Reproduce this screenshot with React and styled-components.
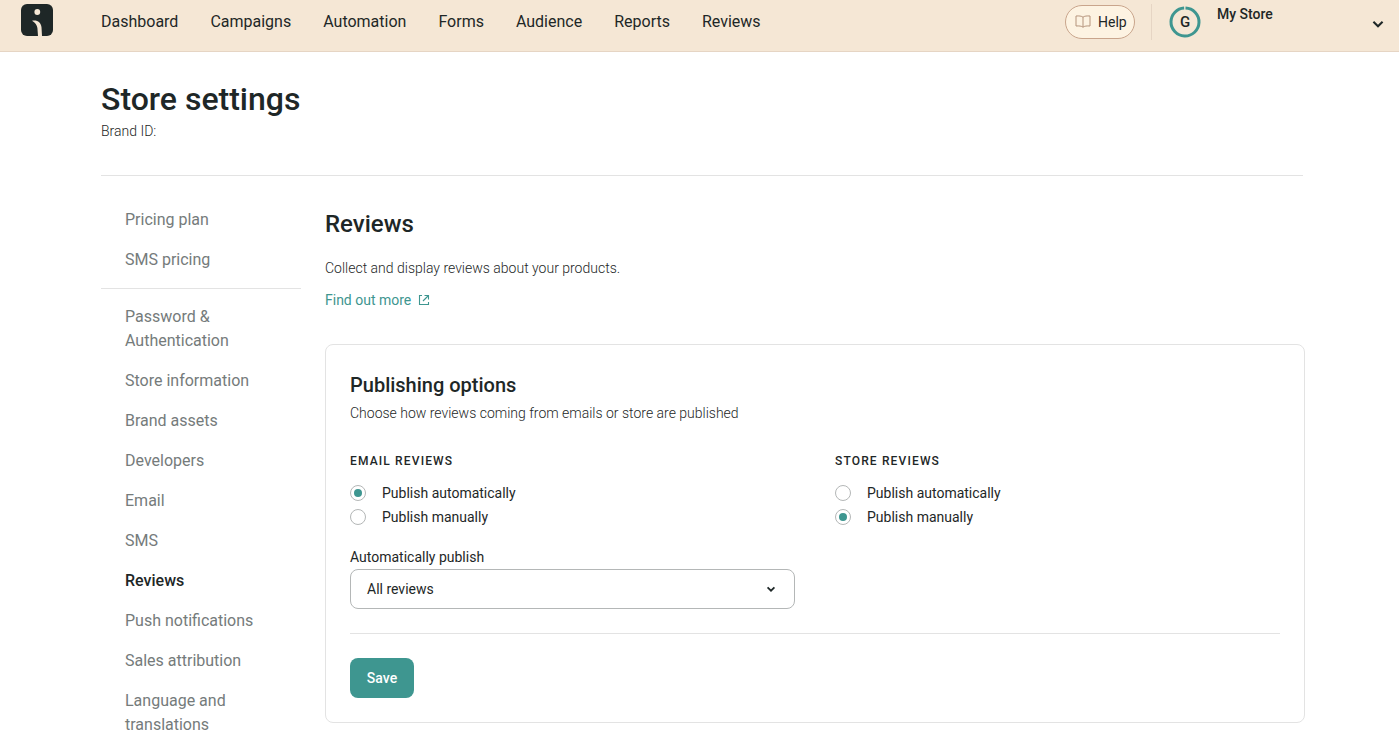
import React from "react";
import styled, { createGlobalStyle } from "styled-components";

const navItems = ["Dashboard", "Campaigns", "Automation", "Forms", "Audience", "Reports", "Reviews"];

const sideGroups = [
  ["Pricing plan", "SMS pricing"],
  [
    "Password & Authentication",
    "Store information",
    "Brand assets",
    "Developers",
    "Email",
    "SMS",
    "Reviews",
    "Push notifications",
    "Sales attribution",
    "Language and translations",
  ],
];

function Logo() {
  return (
    <svg width="32" height="32" viewBox="0 0 32 32">
      <rect width="32" height="32" rx="6" fill="#1e2727" />
      <circle cx="16.3" cy="8" r="2.9" fill="#f5e7d5" />
      <path d="M11 16.7c5-1.2 9 1.5 9.5 6.5l.5 8.8h-4l-.6-8c-.3-3-2.2-5.6-5.4-7.3z" fill="#f5e7d5" />
    </svg>
  );
}

function BookIcon() {
  return (
    <svg width="16" height="13" viewBox="0 0 16 13" fill="none" stroke="#b5947c" strokeWidth="1">
      <path d="M8 2.2C6.6 1 4 .8 1 1v10c3-.2 5.6 0 7 1.2 1.4-1.2 4-1.4 7-1.2V1c-3-.2-5.6 0-7 1.2zM8 2.2v10" />
    </svg>
  );
}

function ChevronIcon({ size = 14, weight = 2 }) {
  return (
    <svg width={size} height={size} viewBox="0 0 14 14" fill="none" stroke="#1e2727" strokeWidth={weight}>
      <path d="M3 5l4 4 4-4" />
    </svg>
  );
}

function ExternalIcon() {
  return (
    <svg width="12" height="12" viewBox="0 0 12 12" fill="none" stroke="#3e9690" strokeWidth="1.1">
      <path d="M4 1.5H1.5v9h9V8M6.5 1.5h4v4M10.5 1.5L5 7" />
    </svg>
  );
}

function Avatar() {
  return (
    <AvatarRing>
      <svg width="32" height="32" viewBox="0 0 32 32" fill="none">
        <circle cx="16" cy="16" r="14" stroke="#3e9690" strokeWidth="3" strokeDasharray="86 2" transform="rotate(-88 16 16)" />
      </svg>
      <AvatarLetter>G</AvatarLetter>
    </AvatarRing>
  );
}

function RadioOption({ label, checked }) {
  return (
    <RadioRow>
      <RadioCircle>{checked && <RadioDot />}</RadioCircle>
      {label}
    </RadioRow>
  );
}

export default function App() {
  return (
    <>
      <GlobalStyle />
      <TopBar>
        <LogoBox>
          <Logo />
        </LogoBox>
        <Nav>
          {navItems.map((item) => (
            <NavLink key={item}>{item}</NavLink>
          ))}
        </Nav>
        <HelpButton>
          <BookIcon />
          Help
        </HelpButton>
        <BarDivider />
        <Avatar />
        <StoreName>My Store</StoreName>
        <StoreChevron>
          <ChevronIcon size={16} weight={1.8} />
        </StoreChevron>
      </TopBar>

      <Page>
        <PageHead>
          <PageTitle>Store settings</PageTitle>
          <BrandId>Brand ID:</BrandId>
        </PageHead>

        <Columns>
          <Sidebar>
            {sideGroups.map((group, i) => (
              <SideGroup key={i} $first={i === 0}>
                {group.map((item) => (
                  <SideItem key={item} $active={item === "Reviews"}>
                    {item}
                  </SideItem>
                ))}
              </SideGroup>
            ))}
          </Sidebar>

          <Content>
            <SectionTitle>Reviews</SectionTitle>
            <Intro>Collect and display reviews about your products.</Intro>
            <FindMore>
              Find out more
              <ExternalIcon />
            </FindMore>

            <Card>
              <CardTitle>Publishing options</CardTitle>
              <CardText>Choose how reviews coming from emails or store are published</CardText>
              <OptionGrid>
                <div>
                  <OptionLabel>Email reviews</OptionLabel>
                  <RadioOption label="Publish automatically" checked />
                  <RadioOption label="Publish manually" />
                  <FieldLabel>Automatically publish</FieldLabel>
                  <SelectBox>
                    All reviews
                    <ChevronIcon size={12} weight={2} />
                  </SelectBox>
                </div>
                <div>
                  <OptionLabel>Store reviews</OptionLabel>
                  <RadioOption label="Publish automatically" />
                  <RadioOption label="Publish manually" checked />
                </div>
              </OptionGrid>
              <CardFooter>
                <SaveButton>Save</SaveButton>
              </CardFooter>
            </Card>
          </Content>
        </Columns>
      </Page>
    </>
  );
}

const GlobalStyle = createGlobalStyle`
  html, body {
    margin: 0;
    padding: 0;
    height: 100%;
    overflow: hidden;
    background: #fff;
    color: #1e2727;
    font-family: Roboto, "Liberation Sans", sans-serif;
  }
  * { box-sizing: border-box; }
`;

// barra superior
const TopBar = styled.header`
  display: flex;
  align-items: center;
  height: 52px;
  padding: 0 13px 0 21px;
  background: #f5e7d5;
  border-bottom: 1px solid #e6d5c4;
`;
const LogoBox = styled.div`
  display: flex;
  width: 32px;
  height: 32px;
  margin-top: -12px;
`;
const Nav = styled.nav`
  display: flex;
  gap: 32px;
  margin-left: 48px;
  flex: 1;
  margin-top: -8px;
`;
const NavLink = styled.a`
  font-size: 16px;
  line-height: 24px;
  color: #1e2727;
`;
const HelpButton = styled.button`
  display: flex;
  align-items: center;
  gap: 7px;
  width: 70px;
  height: 34px;
  padding: 0 0 0 9px;
  margin-top: -8px;
  border: 1px solid #c9a58c;
  border-radius: 17px;
  background: #fdf3e2;
  color: #1e2727;
  font: 400 14px Roboto, sans-serif;
`;
const BarDivider = styled.div`
  width: 1px;
  height: 36px;
  margin: -8px 17px 0 16px;
  background: #e6d5c4;
`;
const AvatarRing = styled.div`
  position: relative;
  width: 32px;
  height: 32px;
  margin-top: -8px;
`;
const AvatarLetter = styled.span`
  position: absolute;
  inset: 0;
  display: flex;
  align-items: center;
  justify-content: center;
  font-size: 15px;
  font-weight: 500;
`;
const StoreName = styled.div`
  align-self: flex-start;
  margin: 4px 0 0 16px;
  width: 153px;
  font-size: 14px;
  line-height: 20px;
  font-weight: 500;
`;
const StoreChevron = styled.div`
  display: flex;
  margin-top: -4px;
`;

// pagina
const Page = styled.main`
  width: 1202px;
  margin-left: 101px;
`;
const PageHead = styled.div`
  height: 124px;
  padding-top: 27px;
  border-bottom: 1px solid #e3e3e3;
`;
const PageTitle = styled.h1`
  margin: 0;
  font-size: 32px;
  line-height: 40px;
  font-weight: 500;
`;
const BrandId = styled.div`
  margin-top: 2px;
  font-size: 14px;
  line-height: 20px;
  font-weight: 300;
`;
const Columns = styled.div`
  display: flex;
  gap: 24px;
`;

// menu lateral
const Sidebar = styled.aside`
  width: 200px;
  flex: none;
  padding-top: 24px;
`;
const SideGroup = styled.div`
  display: flex;
  flex-direction: column;
  gap: 16px;
  padding: ${(p) => (p.$first ? "8px 24px 16px" : "16px 0 0 24px")};
  border-bottom: ${(p) => (p.$first ? "1px solid #e3e3e3" : "none")};
`;
const SideItem = styled.a`
  font-size: 16px;
  line-height: 24px;
  color: ${(p) => (p.$active ? "#1e2727" : "#757b7b")};
  font-weight: ${(p) => (p.$active ? 500 : 400)};
`;

// conteudo
const Content = styled.section`
  flex: 1;
  padding-top: 32px;
`;
const SectionTitle = styled.h2`
  margin: 0;
  font-size: 24px;
  line-height: 32px;
  font-weight: 500;
`;
const Intro = styled.p`
  margin: 18px 0 0;
  font-size: 14px;
  line-height: 20px;
  font-weight: 300;
`;
const FindMore = styled.a`
  display: inline-flex;
  align-items: center;
  gap: 7px;
  margin-top: 12px;
  font-size: 14px;
  line-height: 20px;
  color: #3e9690;
`;
const Card = styled.div`
  width: 980px;
  height: 379px;
  margin-top: 34px;
  padding: 24px;
  border: 1px solid #e3e3e3;
  border-radius: 8px;
`;
const CardTitle = styled.h3`
  margin: 0;
  font-size: 20px;
  line-height: 32px;
  font-weight: 500;
`;
const CardText = styled.p`
  margin: 2px 0 0;
  font-size: 14px;
  line-height: 20px;
  font-weight: 300;
`;
const OptionGrid = styled.div`
  display: grid;
  grid-template-columns: 445px 1fr;
  column-gap: 40px;
  margin-top: 30px;
`;
const OptionLabel = styled.div`
  margin-bottom: 12px;
  font-size: 12px;
  line-height: 16px;
  font-weight: 500;
  letter-spacing: 1.15px;
  text-transform: uppercase;
`;
const RadioRow = styled.label`
  display: flex;
  align-items: center;
  gap: 16px;
  height: 24px;
  font-size: 14px;
`;
const RadioCircle = styled.span`
  display: flex;
  align-items: center;
  justify-content: center;
  width: 16px;
  height: 16px;
  border: 1px solid #b4b7b7;
  border-radius: 50%;
`;
const RadioDot = styled.span`
  width: 8px;
  height: 8px;
  border-radius: 50%;
  background: #3e9690;
`;
const FieldLabel = styled.div`
  margin-top: 16px;
  font-size: 14px;
  line-height: 24px;
`;
const SelectBox = styled.div`
  display: flex;
  align-items: center;
  justify-content: space-between;
  height: 40px;
  padding: 0 17px 0 16px;
  border: 1px solid #b4b7b7;
  border-radius: 8px;
  font-size: 14px;
`;
const CardFooter = styled.div`
  margin-top: 24px;
  padding-top: 24px;
  border-top: 1px solid #e3e3e3;
`;
const SaveButton = styled.button`
  width: 64px;
  height: 40px;
  border: none;
  border-radius: 8px;
  background: #3e9690;
  color: #fff;
  font: 500 14px Roboto, sans-serif;
`;
